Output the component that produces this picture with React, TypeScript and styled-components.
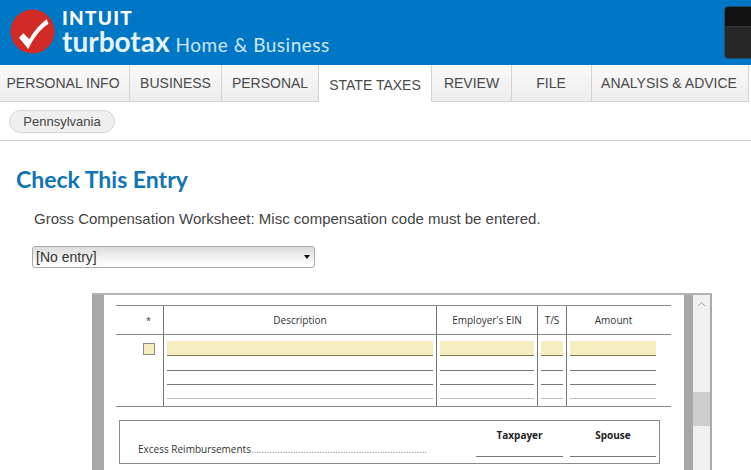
import * as React from "react";
import styled, { createGlobalStyle } from "styled-components";

const GlobalStyle = createGlobalStyle`
  html, body {
    margin: 0;
    padding: 0;
    height: 470px;
    overflow: hidden;
    background: #fff;
    font-family: "Liberation Sans", Arial, sans-serif;
    color: #444;
  }
`;

const Header = styled.header`
  height: 65px;
  background: #0077c5;
  display: flex;
  align-items: flex-start;
  justify-content: space-between;
  padding-left: 10px;
  overflow: hidden;
`;

const Brand = styled.div`
  display: flex;
  align-items: flex-start;
  gap: 7px;
  padding-top: 9px;
`;

const BrandText = styled.div`
  display: flex;
  flex-direction: column;
  color: #fff;
  font-family: Lato, sans-serif;
`;

const IntuitMark = styled.div`
  font-size: 19px;
  line-height: 18px;
  font-weight: 900;
  letter-spacing: 1.3px;
`;

const ProductLine = styled.div`
  display: flex;
  align-items: baseline;
  gap: 6px;
  height: 28px;
`;

const ProductName = styled.span`
  font-size: 28px;
  line-height: 28px;
  font-weight: 700;
  color: #e6f3fb;
`;

const Edition = styled.span`
  font-size: 19px;
  line-height: 28px;
  color: #cfe6f5;
  letter-spacing: 0.52px;
`;

const BlackBox = styled.div`
  width: 40px;
  height: 53px;
  margin-top: 6px;
  flex: none;
  margin-right: -13px;
  border-radius: 4px 0 0 4px;
  border: 1px solid #1f4f70;
  box-sizing: border-box;
  background: linear-gradient(#111 0, #111 19px, #444 19px, #262626 20px, #262626 100%);
`;

const Tabs = styled.nav`
  display: flex;
  height: 37px;
`;

const Tab = styled.div<{ $w: number; $shift?: number; $active?: boolean }>`
  width: ${(p) => p.$w}px;
  flex: none;
  box-sizing: border-box;
  display: flex;
  align-items: center;
  justify-content: center;
  white-space: nowrap;
  font-size: 14px;
  color: #4a4a4a;
  padding-top: ${(p) => (p.$active ? 2 : 0)}px;
  padding-right: ${(p) => p.$shift || 0}px;
  border-right: 1px solid #d4d4d4;
  border-bottom: ${(p) => (p.$active ? "0" : "1px solid #d4d4d4")};
  background: ${(p) => (p.$active ? "#fff" : "linear-gradient(#fafafa, #ededed)")};
`;

const SubBar = styled.div`
  height: 39px;
  box-sizing: border-box;
  padding: 8px 0 0 9px;
  border-bottom: 1px solid #d2d2d2;
`;

const Pill = styled.div`
  width: 106px;
  height: 23px;
  box-sizing: border-box;
  border: 1px solid #d6d6d6;
  border-radius: 12px;
  background: #efefef;
  font-size: 13px;
  line-height: 21px;
  text-align: center;
  color: #444;
`;

const Content = styled.main`
  padding: 25px 0 0 17px;
`;

const Title = styled.h1`
  margin: 0 0 0 -1px;
  font-family: Lato, sans-serif;
  font-size: 23px;
  line-height: 27px;
  font-weight: 700;
  color: #0f75b5;
`;

const Message = styled.p`
  margin: 17px 0 0 17px;
  font-size: 15px;
  line-height: 18px;
  color: #444;
`;

const FakeSelect = styled.div`
  width: 283px;
  height: 22px;
  margin: 18px 0 0 15px;
  box-sizing: border-box;
  display: flex;
  align-items: center;
  justify-content: space-between;
  padding: 0 4px 0 3px;
  border: 1px solid #aaa;
  border-radius: 3px;
  background: linear-gradient(#dcdcdc, #fff 90%);
  font-size: 14px;
  color: #333;
`;

const Caret = styled.span`
  width: 0;
  height: 0;
  border-left: 3.5px solid transparent;
  border-right: 3.5px solid transparent;
  border-top: 4px solid #111;
`;

const FormFrame = styled.section`
  width: 620px;
  height: 200px;
  margin: 25px 0 0 75px;
  box-sizing: border-box;
  display: flex;
  border-top: 2px solid #b4b4b4;
`;

const Gutter = styled.div<{ $w: number }>`
  width: ${(p) => p.$w}px;
  flex: none;
  background: #a8a8a8;
`;

const FormPage = styled.div`
  flex: 1;
  padding: 10px 13px 0 12px;
  font-family: "Open Sans", sans-serif;
  font-size: 10px;
  color: #333;
`;

const Grid = styled.div`
  display: grid;
  grid-template-columns: 47px 273px 101px 29px 105px;
  grid-template-rows: 29px 71px;
  border-top: 1px solid #8a8a8a;
  border-bottom: 1px solid #8a8a8a;
`;

const HeadCell = styled.div<{ $shift?: number; $bare?: boolean }>`
  display: flex;
  align-items: center;
  justify-content: center;
  padding-right: ${(p) => p.$shift || 0}px;
  border-bottom: 1px solid #8a8a8a;
  border-left: ${(p) => (p.$bare ? "0" : "1px solid #777")};
`;

const StarCell = styled(HeadCell)`
  padding-left: 18px;
  font-size: 9px;
`;

const BodyCell = styled.div<{ $pr: number }>`
  box-sizing: border-box;
  padding: 6px ${(p) => p.$pr}px 0 3px;
  border-left: 1px solid #777;
`;

const MarkCell = styled.div`
  display: flex;
  justify-content: flex-end;
  padding: 8px 8px 0 0;
`;

const MarkBox = styled.div`
  width: 12px;
  height: 12px;
  box-sizing: border-box;
  background: #f4edbe;
  border: 1px solid #8d8d80;
`;

const EntryField = styled.div`
  height: 15px;
  box-sizing: border-box;
  background: #f5eebf;
  border-bottom: 1px solid #7d7650;
`;

const EntryLine = styled.div<{ $h: number; $light?: boolean }>`
  height: ${(p) => p.$h}px;
  box-sizing: border-box;
  border-bottom: 1px solid ${(p) => (p.$light ? "#bdbdbd" : "#777")};
`;

const TotalsBox = styled.div`
  width: 541px;
  height: 44px;
  margin: 13px 0 0 3px;
  box-sizing: border-box;
  display: grid;
  grid-template-columns: 338px 87px 93px;
  border: 1px solid #8a8a8a;
  padding-left: 18px;
`;

const TotalsLabel = styled.div`
  align-self: end;
  padding-bottom: 7px;
  white-space: nowrap;
`;

const Leader = styled.span`
  color: #999;
`;

const TotalsColumn = styled.div`
  height: 36px;
  box-sizing: border-box;
  border-bottom: 1px solid #777;
  padding-top: 7px;
  text-align: center;
  font-weight: 700;
  color: #222;
`;

const SpouseColumn = styled(TotalsColumn)`
  margin-left: 7px;
`;

const Scrollbar = styled.div`
  width: 19px;
  flex: none;
  box-sizing: border-box;
  background: #f0f0f0;
  border-right: 2px solid #aaa;
  display: flex;
  flex-direction: column;
`;

const ScrollArrow = styled.div`
  height: 17px;
  display: flex;
  align-items: center;
  justify-content: center;
`;

const ScrollThumb = styled.div`
  height: 34px;
  margin-top: 80px;
  background: #cdcdcd;
`;

const tabs: Array<[string, number, number, boolean?]> = [
  ["PERSONAL INFO", 130, 3],
  ["BUSINESS", 92, 0],
  ["PERSONAL", 97, 0],
  ["STATE TAXES", 113, 0, true],
  ["REVIEW", 80, 0],
  ["FILE", 80, 1],
  ["ANALYSIS & ADVICE", 157, 2],
];

const columns: Array<[string, number, number]> = [
  ["Description", 3, 0],
  ["Employer's EIN", 3, 0],
  ["T/S", 3, 0],
  ["Amount", 15, 11],
];

const App = () => (
  <>
    <GlobalStyle />
    <Header>
      <Brand>
        <svg width="45" height="45" viewBox="0 0 45 45">
          <circle cx="22.5" cy="22.5" r="22" fill="#d22b25" />
          <path
            d="M9 28.7 L13.3 24.3 L19.3 30.3 C24 22 30 15 36.7 10.3 L38.5 15 C30 20 23 30 18.3 40 Z"
            fill="#fff"
          />
        </svg>
        <BrandText>
          <IntuitMark>INTUIT</IntuitMark>
          <ProductLine>
            <ProductName>turbotax</ProductName>
            <Edition>Home &amp; Business</Edition>
          </ProductLine>
        </BrandText>
      </Brand>
      <BlackBox />
    </Header>
    <Tabs>
      {tabs.map(([label, w, shift, active]) => (
        <Tab key={label} $w={w} $shift={shift} $active={active}>
          {label}
        </Tab>
      ))}
    </Tabs>
    <SubBar>
      <Pill>Pennsylvania</Pill>
    </SubBar>
    <Content>
      <Title>Check This Entry</Title>
      <Message>Gross Compensation Worksheet: Misc compensation code must be entered.</Message>
      <FakeSelect>
        [No entry]
        <Caret />
      </FakeSelect>
      <FormFrame>
        <Gutter $w={12} />
        <FormPage>
          <Grid>
            <StarCell $bare>*</StarCell>
            {columns.map(([label, , shift]) => (
              <HeadCell key={label} $shift={shift}>
                {label}
              </HeadCell>
            ))}
            <MarkCell>
              <MarkBox />
            </MarkCell>
            {columns.map(([label, pr]) => (
              <BodyCell key={label} $pr={pr}>
                <EntryField />
                <EntryLine $h={15} />
                <EntryLine $h={14} />
                <EntryLine $h={14} $light />
              </BodyCell>
            ))}
          </Grid>
          <TotalsBox>
            <TotalsLabel>
              Excess Reimbursements
              <Leader>...................................................................</Leader>
            </TotalsLabel>
            <TotalsColumn>Taxpayer</TotalsColumn>
            <SpouseColumn>Spouse</SpouseColumn>
          </TotalsBox>
        </FormPage>
        <Gutter $w={9} />
        <Scrollbar>
          <ScrollArrow>
            <svg width="9" height="6" viewBox="0 0 9 6">
              <path d="M1 5 L4.5 1.5 L8 5" fill="none" stroke="#a6a6a6" strokeWidth="1" />
            </svg>
          </ScrollArrow>
          <ScrollThumb />
        </Scrollbar>
      </FormFrame>
    </Content>
  </>
);

export default App;
